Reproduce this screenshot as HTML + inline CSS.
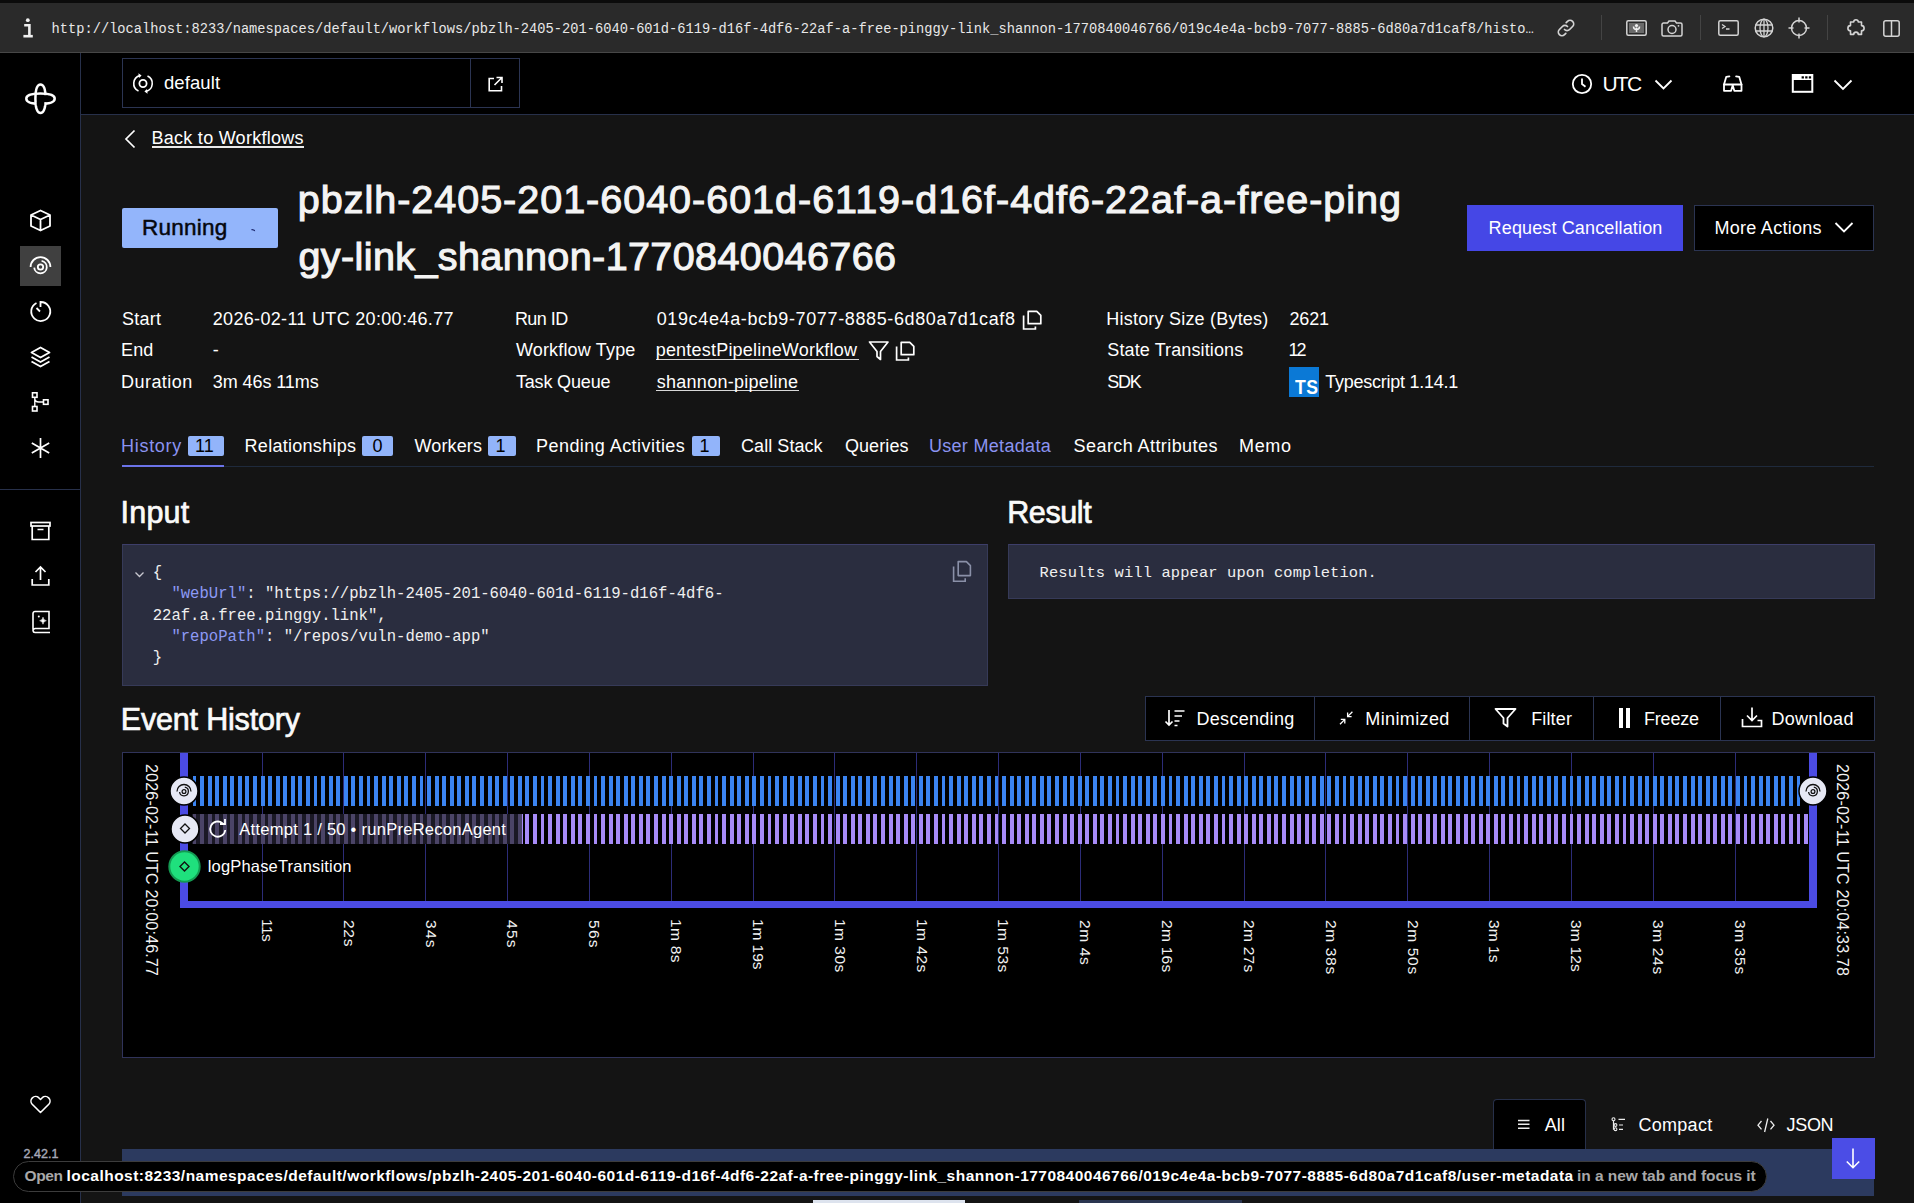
<!DOCTYPE html>
<html><head><meta charset="utf-8"><title>Workflow</title>
<style>
html,body{margin:0;padding:0;}
body{width:1914px;height:1203px;overflow:hidden;position:relative;background:#141414;font-family:'Liberation Sans', sans-serif;}
.t{position:absolute;white-space:pre;line-height:1;}
svg{overflow:visible}
</style></head><body>
<div style="position:absolute;left:0px;top:0px;width:1914px;height:3px;background:#0b0b0b;"></div><div style="position:absolute;left:0px;top:3px;width:1914px;height:49px;background:#2a2a2a;"></div><div style="position:absolute;left:0px;top:52px;width:1914px;height:1px;background:#474747;"></div><svg style="position:absolute;left:20px;top:15px;" width="16" height="26" viewBox="0 0 16 26" fill="none"><circle cx="7.8" cy="5.2" r="1.9" fill="#f0f0f0"/><path d="M4.2 10.2h5.2v10.6" stroke="#f0f0f0" stroke-width="2.6"/><path d="M3.4 21.2h9.4" stroke="#f0f0f0" stroke-width="2.6"/></svg><svg style="position:absolute;left:1556px;top:18px;" width="20" height="20" viewBox="0 0 20 20" fill="none"><path d="M8.5 11.5a3.6 3.6 0 0 0 5.1 0l3-3a3.6 3.6 0 0 0-5.1-5.1l-1.3 1.3M11.5 8.5a3.6 3.6 0 0 0-5.1 0l-3 3a3.6 3.6 0 0 0 5.1 5.1l1.3-1.3" stroke="#d4d4d4" stroke-width="1.7" stroke-linecap="round"/></svg><div style="position:absolute;left:1601px;top:15px;width:1px;height:25px;background:#444;"></div><svg style="position:absolute;left:1626px;top:20px;" width="21" height="16" viewBox="0 0 21 16" fill="none"><rect x="0.8" y="0.8" width="19.4" height="14.4" rx="1.5" stroke="#d4d4d4" stroke-width="1.5"/><rect x="3" y="3" width="15" height="10" fill="#6a6a6a"/><path d="M10.5 12V7.5M10.5 9.5c-2 0-3-1-3-3M10.5 9.5c2 0 3-1 3-3" stroke="#f0f0f0" stroke-width="1.5"/><circle cx="10.5" cy="5.5" r="1.6" fill="#f0f0f0"/></svg><svg style="position:absolute;left:1661px;top:20px;" width="22" height="17" viewBox="0 0 22 17" fill="none"><path d="M1 4.5a1.5 1.5 0 0 1 1.5-1.5h4l1.5-2h6l1.5 2h4a1.5 1.5 0 0 1 1.5 1.5v10a1.5 1.5 0 0 1-1.5 1.5h-17a1.5 1.5 0 0 1-1.5-1.5z" stroke="#d4d4d4" stroke-width="1.5"/><circle cx="11" cy="9.5" r="4" stroke="#d4d4d4" stroke-width="1.5"/><circle cx="17.5" cy="5.8" r="0.9" fill="#d4d4d4"/></svg><div style="position:absolute;left:1700px;top:15px;width:1px;height:25px;background:#444;"></div><svg style="position:absolute;left:1718px;top:20px;" width="21" height="16" viewBox="0 0 21 16" fill="none"><rect x="0.8" y="0.8" width="19.4" height="14.4" rx="1.5" stroke="#d4d4d4" stroke-width="1.5"/><path d="M4 4.5l3 2-3 2M8 9h3.5" stroke="#d4d4d4" stroke-width="1.3"/></svg><svg style="position:absolute;left:1754px;top:18px;" width="20" height="20" viewBox="0 0 20 20" fill="none"><circle cx="10" cy="10" r="8.8" stroke="#d4d4d4" stroke-width="1.5"/><ellipse cx="10" cy="10" rx="4" ry="8.8" stroke="#d4d4d4" stroke-width="1.3"/><path d="M1.5 7h17M1.5 13h17M10 1.2v17.6" stroke="#d4d4d4" stroke-width="1.3"/></svg><svg style="position:absolute;left:1788px;top:17px;" width="22" height="22" viewBox="0 0 22 22" fill="none"><circle cx="11" cy="11" r="7.5" stroke="#d4d4d4" stroke-width="1.5"/><path d="M11 0.5v5M11 16.5v5M0.5 11h5M16.5 11h5" stroke="#d4d4d4" stroke-width="1.5"/></svg><div style="position:absolute;left:1827px;top:15px;width:1px;height:25px;background:#444;"></div><svg style="position:absolute;left:1843px;top:18px;" width="26" height="20" viewBox="0 0 26 20" fill="none"><path d="M7.5 4h3.2a2.3 2.3 0 0 1 4.6 0h3.2v3.6a2.6 2.6 0 0 1 0 5.2v3.6h-3.2a2.3 2.3 0 0 0-4.6 0H7.5v-3.6a2.6 2.6 0 0 1 0-5.2z" stroke="#d4d4d4" stroke-width="1.6" stroke-linejoin="round"/></svg><svg style="position:absolute;left:1883px;top:20px;" width="17" height="17" viewBox="0 0 17 17" fill="none"><rect x="0.8" y="0.8" width="15.4" height="15.4" rx="2" stroke="#d4d4d4" stroke-width="1.5"/><path d="M8.5 1v15" stroke="#d4d4d4" stroke-width="1.5"/></svg><div style="position:absolute;left:0px;top:53px;width:80px;height:1150px;background:#000000;"></div><div style="position:absolute;left:80px;top:53px;width:1px;height:1150px;background:#27304a;"></div><div style="position:absolute;left:81px;top:53px;width:1833px;height:61px;background:#000000;"></div><div style="position:absolute;left:81px;top:114px;width:1833px;height:1px;background:#27304a;"></div><div style="position:absolute;left:0px;top:489px;width:80px;height:1px;background:#27304a;"></div><svg style="position:absolute;left:23px;top:82px;" width="35" height="35" viewBox="0 0 35 35" fill="none"><path d="M3.3 16.7C3.3 12.5 11 11.6 17.5 11.6S31.7 12.5 31.7 16.7 24 21.8 17.5 21.8 3.3 20.9 3.3 16.7z" stroke="#fff" stroke-width="2.5"/><path d="M17.5 2.5C13.3 2.5 12.4 10.2 12.4 16.7S13.3 30.9 17.5 30.9 22.6 23.2 22.6 16.7 21.7 2.5 17.5 2.5z" stroke="#fff" stroke-width="2.5"/><rect x="20.7" y="13.2" width="3.6" height="6.9" fill="#000"/><rect x="13.75" y="20.0" width="7.5" height="3.5" fill="#000"/></svg><svg style="position:absolute;left:29px;top:209px;" width="23" height="23" viewBox="0 0 23 23" fill="none"><path d="M11.5 1.5l9.5 4.5v11L11.5 21.5 2 17V6z M2 6l9.5 4.5L21 6 M11.5 10.5v11" stroke="#fff" stroke-width="1.8" stroke-linejoin="round"/></svg><div style="position:absolute;left:20px;top:246px;width:41px;height:40px;background:#404040;"></div><svg style="position:absolute;left:29px;top:255px;" width="23" height="22" viewBox="0 0 23 22" fill="none"><path d="M1.6 12A9.9 9.9 0 0 1 21.4 12" stroke="#fff" stroke-width="1.8"/><path d="M12.6 5.8A6.3 6.3 0 1 1 5.2 12.6" stroke="#fff" stroke-width="1.8"/><circle cx="11.5" cy="12" r="2.7" stroke="#fff" stroke-width="1.8"/></svg><svg style="position:absolute;left:29px;top:300px;" width="23" height="23" viewBox="0 0 23 23" fill="none"><path d="M7.5 3A9.5 9.5 0 1 0 11.5 2v5" stroke="#fff" stroke-width="1.8"/><path d="M7.5 8l3.5 3.5" stroke="#fff" stroke-width="1.8"/></svg><svg style="position:absolute;left:29px;top:345px;" width="23" height="24" viewBox="0 0 23 24" fill="none"><path d="M11.5 2.5l9 5-9 5-9-5z" stroke="#fff" stroke-width="1.8" stroke-linejoin="round"/><path d="M2.5 12l9 5 9-5M2.5 16.5l9 5 9-5" stroke="#fff" stroke-width="1.8" stroke-linejoin="round"/></svg><svg style="position:absolute;left:30px;top:391px;" width="22" height="24" viewBox="0 0 22 24" fill="none"><rect x="2.5" y="1.8" width="4.5" height="4.5" stroke="#fff" stroke-width="1.6"/><rect x="2.5" y="15.5" width="4.5" height="4.5" stroke="#fff" stroke-width="1.6"/><rect x="13.5" y="8.8" width="4.5" height="4.5" stroke="#fff" stroke-width="1.6"/><path d="M4.8 6.3v9.2M4.8 7.5c0 3 1.5 3.5 4 3.5h4.7" stroke="#fff" stroke-width="1.4"/></svg><svg style="position:absolute;left:29px;top:436px;" width="23" height="24" viewBox="0 0 23 24" fill="none"><path d="M11.5 2v20M2.8 7l17.4 10M2.8 17l17.4-10" stroke="#fff" stroke-width="1.7"/></svg><svg style="position:absolute;left:29px;top:520px;" width="23" height="22" viewBox="0 0 23 22" fill="none"><rect x="2" y="2.5" width="19" height="3.5" stroke="#fff" stroke-width="1.7"/><path d="M3.2 6v13.5h16.6V6M8.5 9.5h6" stroke="#fff" stroke-width="1.7"/></svg><svg style="position:absolute;left:29px;top:564px;" width="23" height="23" viewBox="0 0 23 23" fill="none"><path d="M11.5 16V3M6.5 8l5-5 5 5M3.2 15v6h16.6v-6" stroke="#fff" stroke-width="1.7"/></svg><svg style="position:absolute;left:29px;top:609px;" width="23" height="25" viewBox="0 0 23 25" fill="none"><path d="M4 20.5V4.5A2 2 0 0 1 6 2.5h14v17H6.2A2.2 2.2 0 0 0 4 21.7 2 2 0 0 0 6 23.5h15" stroke="#fff" stroke-width="1.6"/><path d="M14 8.2Q14.4 11.3 17.3 11.7Q14.4 12.1 14 15.2Q13.6 12.1 10.7 11.7Q13.6 11.3 14 8.2z" fill="#fff" stroke="#fff" stroke-width="0.6"/><circle cx="9.8" cy="7.6" r="1" fill="#fff"/></svg><svg style="position:absolute;left:29px;top:1093px;" width="23" height="22" viewBox="0 0 23 22" fill="none"><path d="M11.5 19.5L3.2 11.2A4.6 4.6 0 0 1 9.7 4.7l1.8 1.8 1.8-1.8a4.6 4.6 0 0 1 6.5 6.5z" stroke="#fff" stroke-width="1.6" stroke-linejoin="round"/></svg><div style="position:absolute;left:122px;top:58px;width:396px;height:48px;border:1px solid #2b3452;background:#000"></div><div style="position:absolute;left:470px;top:59px;width:1px;height:48px;background:#2b3452;"></div><svg style="position:absolute;left:132px;top:72px;" width="22" height="23" viewBox="0 0 22 23" fill="none"><circle cx="11" cy="11.5" r="3.6" stroke="#fff" stroke-width="1.8"/><path d="M6.5 19A8.2 8.2 0 0 1 8 3.6M15.5 4A8.2 8.2 0 0 1 14 19.4" stroke="#fff" stroke-width="1.6"/><path d="M6.4 1.2l3.2 2.2-2.6 2.6z M15.6 21.8l-3.2-2.2 2.6-2.6z" fill="#fff"/></svg><svg style="position:absolute;left:487px;top:76px;" width="16" height="16" viewBox="0 0 16 16" fill="none"><path d="M7 2.5H2.2v12.3h12.3V10M9.5 1.5h5.5V7M15 1.5L7.5 9" stroke="#fff" stroke-width="1.6"/></svg><svg style="position:absolute;left:1571px;top:73px;" width="22" height="22" viewBox="0 0 22 22" fill="none"><circle cx="11" cy="11" r="9.2" stroke="#fff" stroke-width="1.8"/><path d="M11 5.5v5.5l3.5 2.8" stroke="#fff" stroke-width="1.8"/></svg><svg style="position:absolute;left:1654px;top:78px;" width="19" height="13" viewBox="0 0 19 13" fill="none"><path d="M1.5 2.5l8 8 8-8" stroke="#fff" stroke-width="1.8"/></svg><svg style="position:absolute;left:1721px;top:74px;" width="24" height="19" viewBox="0 0 24 19" fill="none"><path d="M3 16.8V10.5h17.5v6.3h-7.2l-1.6-5.5-1.6 5.5z" stroke="#fff" stroke-width="1.8" stroke-linejoin="round"/><path d="M3 10.5l2.2-7.6 3.2-0.5M20.5 10.5l-2.2-7.6-3.2-0.5" stroke="#fff" stroke-width="1.8" stroke-linejoin="round" stroke-linecap="round"/></svg><svg style="position:absolute;left:1791px;top:73px;" width="24" height="21" viewBox="0 0 24 21" fill="none"><rect x="1.8" y="2" width="19.5" height="16.8" stroke="#fff" stroke-width="2"/><rect x="1.8" y="2" width="19.5" height="5" fill="#fff"/><rect x="10.6" y="3.3" width="2.3" height="2.2" fill="#000"/><rect x="14.2" y="3.3" width="2.3" height="2.2" fill="#000"/><rect x="17.8" y="3.3" width="2.3" height="2.2" fill="#000"/></svg><svg style="position:absolute;left:1833px;top:78px;" width="20" height="13" viewBox="0 0 20 13" fill="none"><path d="M1.5 2.5l8.5 8.5 8.5-8.5" stroke="#fff" stroke-width="1.8"/></svg><svg style="position:absolute;left:123px;top:129px;" width="14" height="20" viewBox="0 0 14 20" fill="none"><path d="M11.5 1.5L3 10l8.5 8.5" stroke="#fff" stroke-width="1.7"/></svg><div style="position:absolute;left:152px;top:146px;width:152px;height:2px;background:#eaeaea;"></div><div style="position:absolute;left:122px;top:208px;width:156px;height:40px;background:#93b5fb;border-radius:2px"></div><svg style="position:absolute;left:250px;top:227px;" width="9" height="6" viewBox="0 0 9 6" fill="none"><path d="M1.5 3c1.2-1.3 2.3 0.8 3.5 0.5" stroke="#1e2a70" stroke-width="1.3"/></svg><div style="position:absolute;left:1467px;top:205px;width:216px;height:46px;background:#4547e6;"></div><div style="position:absolute;left:1694px;top:205px;width:178px;height:44px;border:1px solid #2b3452;background:#000"></div><svg style="position:absolute;left:1834px;top:221px;" width="20" height="13" viewBox="0 0 20 13" fill="none"><path d="M1.5 2l8.5 8.5L18.5 2" stroke="#fff" stroke-width="1.8"/></svg><div style="position:absolute;left:656px;top:359px;width:203px;height:1px;background:#d8d8d8;"></div><div style="position:absolute;left:656px;top:390px;width:143px;height:1px;background:#d8d8d8;"></div><svg style="position:absolute;left:1022px;top:310px;" width="19" height="21" viewBox="0 0 19 21" fill="none"><path d="M6.2 1.3h8.6l4 4v8.4H6.2z" stroke="#fff" stroke-width="1.7" stroke-linejoin="round"/><path d="M1.6 5.4v13.6h11.8v-2.6" stroke="#fff" stroke-width="1.7"/></svg><svg style="position:absolute;left:868px;top:340px;" width="22" height="21" viewBox="0 0 22 21" fill="none"><path d="M1.5 2h18.5l-7.5 9.5v8l-3.5-3v-5z" stroke="#fff" stroke-width="1.7" stroke-linejoin="round"/></svg><svg style="position:absolute;left:894.8px;top:341px;" width="19" height="21" viewBox="0 0 19 21" fill="none"><path d="M6.2 1.3h8.6l4 4v8.4H6.2z" stroke="#fff" stroke-width="1.7" stroke-linejoin="round"/><path d="M1.6 5.4v13.6h11.8v-2.6" stroke="#fff" stroke-width="1.7"/></svg><div style="position:absolute;left:1289px;top:367px;width:30px;height:30px;background:#0b79d6;"></div><div style="position:absolute;left:1295.2px;top:377.2px;font-family:'Liberation Sans',sans-serif;font-weight:700;font-size:20.5px;line-height:20.5px;color:#fff;white-space:pre;letter-spacing:0.6px;transform:scaleX(0.86);transform-origin:0 0">TS</div><div style="position:absolute;left:188px;top:436px;width:36px;height:20px;background:#92b4fa;border-radius:2px"></div><div style="position:absolute;left:362px;top:436px;width:31px;height:20px;background:#92b4fa;border-radius:2px"></div><div style="position:absolute;left:488px;top:436px;width:28px;height:20px;background:#92b4fa;border-radius:2px"></div><div style="position:absolute;left:692px;top:436px;width:28px;height:20px;background:#92b4fa;border-radius:2px"></div><div style="position:absolute;left:122px;top:466px;width:1752px;height:1px;background:#1f2a3c;"></div><div style="position:absolute;left:122px;top:465px;width:102px;height:2px;background:#6b73e8;"></div><div style="position:absolute;left:122px;top:544px;width:864px;height:140px;background:#2a2d3f;border:1px solid #363a58;border-top-color:#3d3e6a"></div><div style="position:absolute;left:1008px;top:544px;width:865px;height:53px;background:#2a2d3f;border:1px solid #363a58;border-top-color:#3d3e6a"></div><svg style="position:absolute;left:134px;top:570px;" width="12" height="10" viewBox="0 0 12 10" fill="none"><path d="M1.5 2.5l4 4 4-4" stroke="#c8c8d0" stroke-width="1.3"/></svg><svg style="position:absolute;left:951px;top:560px;" width="21" height="23" viewBox="0 0 21 23" fill="none"><path d="M7.2 1.6h8.2l4 4v10H7.2z" stroke="#8a90a8" stroke-width="1.6" stroke-linejoin="round"/><path d="M2.6 6.6v14.6h11.6v-3" stroke="#8a90a8" stroke-width="1.6"/></svg><div style="position:absolute;left:1145px;top:696px;width:728px;height:43px;background:#000;border:1px solid #2b3452"></div><div style="position:absolute;left:1314px;top:697px;width:1px;height:43px;background:#2b3452;"></div><div style="position:absolute;left:1469px;top:697px;width:1px;height:43px;background:#2b3452;"></div><div style="position:absolute;left:1593px;top:697px;width:1px;height:43px;background:#2b3452;"></div><div style="position:absolute;left:1720px;top:697px;width:1px;height:43px;background:#2b3452;"></div><svg style="position:absolute;left:1164px;top:708px;" width="24" height="20" viewBox="0 0 24 20" fill="none"><path d="M5 2v15M1.5 13.5L5 17l3.5-3.5M10.5 3h10M10.5 8h7.5M10.5 13h5M10.5 17.5h3" stroke="#fff" stroke-width="1.7"/></svg><svg style="position:absolute;left:1338px;top:710px;" width="16" height="16" viewBox="0 0 16 16" fill="none"><path d="M2 14.2l4.6-4.6M2.8 9.4h4v4M14.4 1.8L9.8 6.4M9.6 2.6v4h4" stroke="#fff" stroke-width="1.3"/></svg><svg style="position:absolute;left:1494px;top:707px;" width="24" height="21" viewBox="0 0 24 21" fill="none"><path d="M1.5 2h20l-8 9v8.5l-4-3v-5.5z" stroke="#fff" stroke-width="1.8" stroke-linejoin="round"/></svg><div style="position:absolute;left:1619px;top:708px;width:4px;height:20px;background:#fff;"></div><div style="position:absolute;left:1626px;top:708px;width:4px;height:20px;background:#fff;"></div><svg style="position:absolute;left:1740px;top:706px;" width="24" height="22" viewBox="0 0 24 22" fill="none"><path d="M12 1.5v13M7 9.5l5 5 5-5M2.5 13v7.5h19V14.5h-4" stroke="#fff" stroke-width="1.7"/></svg><div style="position:absolute;left:122px;top:752px;width:1751px;height:304px;background:#000;border:1px solid #30335a"></div><div style="position:absolute;left:262px;top:753px;width:1px;height:148px;background:#2c2c78;"></div><div style="position:absolute;left:343px;top:753px;width:1px;height:148px;background:#2c2c78;"></div><div style="position:absolute;left:425px;top:753px;width:1px;height:148px;background:#2c2c78;"></div><div style="position:absolute;left:507px;top:753px;width:1px;height:148px;background:#2c2c78;"></div><div style="position:absolute;left:589px;top:753px;width:1px;height:148px;background:#2c2c78;"></div><div style="position:absolute;left:671px;top:753px;width:1px;height:148px;background:#2c2c78;"></div><div style="position:absolute;left:753px;top:753px;width:1px;height:148px;background:#2c2c78;"></div><div style="position:absolute;left:834px;top:753px;width:1px;height:148px;background:#2c2c78;"></div><div style="position:absolute;left:916px;top:753px;width:1px;height:148px;background:#2c2c78;"></div><div style="position:absolute;left:998px;top:753px;width:1px;height:148px;background:#2c2c78;"></div><div style="position:absolute;left:1080px;top:753px;width:1px;height:148px;background:#2c2c78;"></div><div style="position:absolute;left:1162px;top:753px;width:1px;height:148px;background:#2c2c78;"></div><div style="position:absolute;left:1244px;top:753px;width:1px;height:148px;background:#2c2c78;"></div><div style="position:absolute;left:1325px;top:753px;width:1px;height:148px;background:#2c2c78;"></div><div style="position:absolute;left:1407px;top:753px;width:1px;height:148px;background:#2c2c78;"></div><div style="position:absolute;left:1489px;top:753px;width:1px;height:148px;background:#2c2c78;"></div><div style="position:absolute;left:1571px;top:753px;width:1px;height:148px;background:#2c2c78;"></div><div style="position:absolute;left:1653px;top:753px;width:1px;height:148px;background:#2c2c78;"></div><div style="position:absolute;left:1735px;top:753px;width:1px;height:148px;background:#2c2c78;"></div><svg style="position:absolute;left:0;top:776px" width="1914" height="30" shape-rendering="crispEdges"><rect x="193" y="0" width="3" height="30" fill="#3b84f1"/><rect x="200" y="0" width="4" height="30" fill="#3b84f1"/><rect x="208" y="0" width="4" height="30" fill="#3b84f1"/><rect x="215" y="0" width="4" height="30" fill="#3b84f1"/><rect x="223" y="0" width="4" height="30" fill="#3b84f1"/><rect x="230" y="0" width="4" height="30" fill="#3b84f1"/><rect x="238" y="0" width="4" height="30" fill="#3b84f1"/><rect x="245" y="0" width="4" height="30" fill="#3b84f1"/><rect x="253" y="0" width="4" height="30" fill="#3b84f1"/><rect x="261" y="0" width="4" height="30" fill="#3b84f1"/><rect x="268" y="0" width="4" height="30" fill="#3b84f1"/><rect x="276" y="0" width="4" height="30" fill="#3b84f1"/><rect x="283" y="0" width="4" height="30" fill="#3b84f1"/><rect x="291" y="0" width="4" height="30" fill="#3b84f1"/><rect x="298" y="0" width="4" height="30" fill="#3b84f1"/><rect x="306" y="0" width="4" height="30" fill="#3b84f1"/><rect x="314" y="0" width="3" height="30" fill="#3b84f1"/><rect x="321" y="0" width="4" height="30" fill="#3b84f1"/><rect x="329" y="0" width="4" height="30" fill="#3b84f1"/><rect x="336" y="0" width="4" height="30" fill="#3b84f1"/><rect x="344" y="0" width="4" height="30" fill="#3b84f1"/><rect x="351" y="0" width="4" height="30" fill="#3b84f1"/><rect x="359" y="0" width="4" height="30" fill="#3b84f1"/><rect x="367" y="0" width="3" height="30" fill="#3b84f1"/><rect x="374" y="0" width="4" height="30" fill="#3b84f1"/><rect x="382" y="0" width="4" height="30" fill="#3b84f1"/><rect x="389" y="0" width="4" height="30" fill="#3b84f1"/><rect x="397" y="0" width="4" height="30" fill="#3b84f1"/><rect x="404" y="0" width="4" height="30" fill="#3b84f1"/><rect x="412" y="0" width="4" height="30" fill="#3b84f1"/><rect x="420" y="0" width="3" height="30" fill="#3b84f1"/><rect x="427" y="0" width="4" height="30" fill="#3b84f1"/><rect x="435" y="0" width="4" height="30" fill="#3b84f1"/><rect x="442" y="0" width="4" height="30" fill="#3b84f1"/><rect x="450" y="0" width="4" height="30" fill="#3b84f1"/><rect x="457" y="0" width="4" height="30" fill="#3b84f1"/><rect x="465" y="0" width="4" height="30" fill="#3b84f1"/><rect x="472" y="0" width="4" height="30" fill="#3b84f1"/><rect x="480" y="0" width="4" height="30" fill="#3b84f1"/><rect x="488" y="0" width="4" height="30" fill="#3b84f1"/><rect x="495" y="0" width="4" height="30" fill="#3b84f1"/><rect x="503" y="0" width="4" height="30" fill="#3b84f1"/><rect x="510" y="0" width="4" height="30" fill="#3b84f1"/><rect x="518" y="0" width="4" height="30" fill="#3b84f1"/><rect x="525" y="0" width="4" height="30" fill="#3b84f1"/><rect x="533" y="0" width="4" height="30" fill="#3b84f1"/><rect x="541" y="0" width="3" height="30" fill="#3b84f1"/><rect x="548" y="0" width="4" height="30" fill="#3b84f1"/><rect x="556" y="0" width="4" height="30" fill="#3b84f1"/><rect x="563" y="0" width="4" height="30" fill="#3b84f1"/><rect x="571" y="0" width="4" height="30" fill="#3b84f1"/><rect x="578" y="0" width="4" height="30" fill="#3b84f1"/><rect x="586" y="0" width="4" height="30" fill="#3b84f1"/><rect x="594" y="0" width="3" height="30" fill="#3b84f1"/><rect x="601" y="0" width="4" height="30" fill="#3b84f1"/><rect x="609" y="0" width="4" height="30" fill="#3b84f1"/><rect x="616" y="0" width="4" height="30" fill="#3b84f1"/><rect x="624" y="0" width="4" height="30" fill="#3b84f1"/><rect x="631" y="0" width="4" height="30" fill="#3b84f1"/><rect x="639" y="0" width="4" height="30" fill="#3b84f1"/><rect x="646" y="0" width="4" height="30" fill="#3b84f1"/><rect x="654" y="0" width="4" height="30" fill="#3b84f1"/><rect x="662" y="0" width="4" height="30" fill="#3b84f1"/><rect x="669" y="0" width="4" height="30" fill="#3b84f1"/><rect x="677" y="0" width="4" height="30" fill="#3b84f1"/><rect x="684" y="0" width="4" height="30" fill="#3b84f1"/><rect x="692" y="0" width="4" height="30" fill="#3b84f1"/><rect x="699" y="0" width="4" height="30" fill="#3b84f1"/><rect x="707" y="0" width="4" height="30" fill="#3b84f1"/><rect x="715" y="0" width="3" height="30" fill="#3b84f1"/><rect x="722" y="0" width="4" height="30" fill="#3b84f1"/><rect x="730" y="0" width="4" height="30" fill="#3b84f1"/><rect x="737" y="0" width="4" height="30" fill="#3b84f1"/><rect x="745" y="0" width="4" height="30" fill="#3b84f1"/><rect x="752" y="0" width="4" height="30" fill="#3b84f1"/><rect x="760" y="0" width="4" height="30" fill="#3b84f1"/><rect x="768" y="0" width="3" height="30" fill="#3b84f1"/><rect x="775" y="0" width="4" height="30" fill="#3b84f1"/><rect x="783" y="0" width="4" height="30" fill="#3b84f1"/><rect x="790" y="0" width="4" height="30" fill="#3b84f1"/><rect x="798" y="0" width="4" height="30" fill="#3b84f1"/><rect x="805" y="0" width="4" height="30" fill="#3b84f1"/><rect x="813" y="0" width="4" height="30" fill="#3b84f1"/><rect x="821" y="0" width="3" height="30" fill="#3b84f1"/><rect x="828" y="0" width="4" height="30" fill="#3b84f1"/><rect x="836" y="0" width="4" height="30" fill="#3b84f1"/><rect x="843" y="0" width="4" height="30" fill="#3b84f1"/><rect x="851" y="0" width="4" height="30" fill="#3b84f1"/><rect x="858" y="0" width="4" height="30" fill="#3b84f1"/><rect x="866" y="0" width="4" height="30" fill="#3b84f1"/><rect x="873" y="0" width="4" height="30" fill="#3b84f1"/><rect x="881" y="0" width="4" height="30" fill="#3b84f1"/><rect x="889" y="0" width="4" height="30" fill="#3b84f1"/><rect x="896" y="0" width="4" height="30" fill="#3b84f1"/><rect x="904" y="0" width="4" height="30" fill="#3b84f1"/><rect x="911" y="0" width="4" height="30" fill="#3b84f1"/><rect x="919" y="0" width="4" height="30" fill="#3b84f1"/><rect x="926" y="0" width="4" height="30" fill="#3b84f1"/><rect x="934" y="0" width="4" height="30" fill="#3b84f1"/><rect x="942" y="0" width="3" height="30" fill="#3b84f1"/><rect x="949" y="0" width="4" height="30" fill="#3b84f1"/><rect x="957" y="0" width="4" height="30" fill="#3b84f1"/><rect x="964" y="0" width="4" height="30" fill="#3b84f1"/><rect x="972" y="0" width="4" height="30" fill="#3b84f1"/><rect x="979" y="0" width="4" height="30" fill="#3b84f1"/><rect x="987" y="0" width="4" height="30" fill="#3b84f1"/><rect x="995" y="0" width="3" height="30" fill="#3b84f1"/><rect x="1002" y="0" width="4" height="30" fill="#3b84f1"/><rect x="1010" y="0" width="4" height="30" fill="#3b84f1"/><rect x="1017" y="0" width="4" height="30" fill="#3b84f1"/><rect x="1025" y="0" width="4" height="30" fill="#3b84f1"/><rect x="1032" y="0" width="4" height="30" fill="#3b84f1"/><rect x="1040" y="0" width="4" height="30" fill="#3b84f1"/><rect x="1047" y="0" width="4" height="30" fill="#3b84f1"/><rect x="1055" y="0" width="4" height="30" fill="#3b84f1"/><rect x="1063" y="0" width="4" height="30" fill="#3b84f1"/><rect x="1070" y="0" width="4" height="30" fill="#3b84f1"/><rect x="1078" y="0" width="4" height="30" fill="#3b84f1"/><rect x="1085" y="0" width="4" height="30" fill="#3b84f1"/><rect x="1093" y="0" width="4" height="30" fill="#3b84f1"/><rect x="1100" y="0" width="4" height="30" fill="#3b84f1"/><rect x="1108" y="0" width="4" height="30" fill="#3b84f1"/><rect x="1116" y="0" width="3" height="30" fill="#3b84f1"/><rect x="1123" y="0" width="4" height="30" fill="#3b84f1"/><rect x="1131" y="0" width="4" height="30" fill="#3b84f1"/><rect x="1138" y="0" width="4" height="30" fill="#3b84f1"/><rect x="1146" y="0" width="4" height="30" fill="#3b84f1"/><rect x="1153" y="0" width="4" height="30" fill="#3b84f1"/><rect x="1161" y="0" width="4" height="30" fill="#3b84f1"/><rect x="1169" y="0" width="3" height="30" fill="#3b84f1"/><rect x="1176" y="0" width="4" height="30" fill="#3b84f1"/><rect x="1184" y="0" width="4" height="30" fill="#3b84f1"/><rect x="1191" y="0" width="4" height="30" fill="#3b84f1"/><rect x="1199" y="0" width="4" height="30" fill="#3b84f1"/><rect x="1206" y="0" width="4" height="30" fill="#3b84f1"/><rect x="1214" y="0" width="4" height="30" fill="#3b84f1"/><rect x="1222" y="0" width="3" height="30" fill="#3b84f1"/><rect x="1229" y="0" width="4" height="30" fill="#3b84f1"/><rect x="1237" y="0" width="4" height="30" fill="#3b84f1"/><rect x="1244" y="0" width="4" height="30" fill="#3b84f1"/><rect x="1252" y="0" width="4" height="30" fill="#3b84f1"/><rect x="1259" y="0" width="4" height="30" fill="#3b84f1"/><rect x="1267" y="0" width="4" height="30" fill="#3b84f1"/><rect x="1274" y="0" width="4" height="30" fill="#3b84f1"/><rect x="1282" y="0" width="4" height="30" fill="#3b84f1"/><rect x="1290" y="0" width="4" height="30" fill="#3b84f1"/><rect x="1297" y="0" width="4" height="30" fill="#3b84f1"/><rect x="1305" y="0" width="4" height="30" fill="#3b84f1"/><rect x="1312" y="0" width="4" height="30" fill="#3b84f1"/><rect x="1320" y="0" width="4" height="30" fill="#3b84f1"/><rect x="1327" y="0" width="4" height="30" fill="#3b84f1"/><rect x="1335" y="0" width="4" height="30" fill="#3b84f1"/><rect x="1343" y="0" width="3" height="30" fill="#3b84f1"/><rect x="1350" y="0" width="4" height="30" fill="#3b84f1"/><rect x="1358" y="0" width="4" height="30" fill="#3b84f1"/><rect x="1365" y="0" width="4" height="30" fill="#3b84f1"/><rect x="1373" y="0" width="4" height="30" fill="#3b84f1"/><rect x="1380" y="0" width="4" height="30" fill="#3b84f1"/><rect x="1388" y="0" width="4" height="30" fill="#3b84f1"/><rect x="1396" y="0" width="3" height="30" fill="#3b84f1"/><rect x="1403" y="0" width="4" height="30" fill="#3b84f1"/><rect x="1411" y="0" width="4" height="30" fill="#3b84f1"/><rect x="1418" y="0" width="4" height="30" fill="#3b84f1"/><rect x="1426" y="0" width="4" height="30" fill="#3b84f1"/><rect x="1433" y="0" width="4" height="30" fill="#3b84f1"/><rect x="1441" y="0" width="4" height="30" fill="#3b84f1"/><rect x="1448" y="0" width="4" height="30" fill="#3b84f1"/><rect x="1456" y="0" width="4" height="30" fill="#3b84f1"/><rect x="1464" y="0" width="4" height="30" fill="#3b84f1"/><rect x="1471" y="0" width="4" height="30" fill="#3b84f1"/><rect x="1479" y="0" width="4" height="30" fill="#3b84f1"/><rect x="1486" y="0" width="4" height="30" fill="#3b84f1"/><rect x="1494" y="0" width="4" height="30" fill="#3b84f1"/><rect x="1501" y="0" width="4" height="30" fill="#3b84f1"/><rect x="1509" y="0" width="4" height="30" fill="#3b84f1"/><rect x="1517" y="0" width="3" height="30" fill="#3b84f1"/><rect x="1524" y="0" width="4" height="30" fill="#3b84f1"/><rect x="1532" y="0" width="4" height="30" fill="#3b84f1"/><rect x="1539" y="0" width="4" height="30" fill="#3b84f1"/><rect x="1547" y="0" width="4" height="30" fill="#3b84f1"/><rect x="1554" y="0" width="4" height="30" fill="#3b84f1"/><rect x="1562" y="0" width="4" height="30" fill="#3b84f1"/><rect x="1570" y="0" width="3" height="30" fill="#3b84f1"/><rect x="1577" y="0" width="4" height="30" fill="#3b84f1"/><rect x="1585" y="0" width="4" height="30" fill="#3b84f1"/><rect x="1592" y="0" width="4" height="30" fill="#3b84f1"/><rect x="1600" y="0" width="4" height="30" fill="#3b84f1"/><rect x="1607" y="0" width="4" height="30" fill="#3b84f1"/><rect x="1615" y="0" width="4" height="30" fill="#3b84f1"/><rect x="1623" y="0" width="3" height="30" fill="#3b84f1"/><rect x="1630" y="0" width="4" height="30" fill="#3b84f1"/><rect x="1638" y="0" width="4" height="30" fill="#3b84f1"/><rect x="1645" y="0" width="4" height="30" fill="#3b84f1"/><rect x="1653" y="0" width="4" height="30" fill="#3b84f1"/><rect x="1660" y="0" width="4" height="30" fill="#3b84f1"/><rect x="1668" y="0" width="4" height="30" fill="#3b84f1"/><rect x="1675" y="0" width="4" height="30" fill="#3b84f1"/><rect x="1683" y="0" width="4" height="30" fill="#3b84f1"/><rect x="1691" y="0" width="4" height="30" fill="#3b84f1"/><rect x="1698" y="0" width="4" height="30" fill="#3b84f1"/><rect x="1706" y="0" width="4" height="30" fill="#3b84f1"/><rect x="1713" y="0" width="4" height="30" fill="#3b84f1"/><rect x="1721" y="0" width="4" height="30" fill="#3b84f1"/><rect x="1728" y="0" width="4" height="30" fill="#3b84f1"/><rect x="1736" y="0" width="4" height="30" fill="#3b84f1"/><rect x="1744" y="0" width="3" height="30" fill="#3b84f1"/><rect x="1751" y="0" width="4" height="30" fill="#3b84f1"/><rect x="1759" y="0" width="4" height="30" fill="#3b84f1"/><rect x="1766" y="0" width="4" height="30" fill="#3b84f1"/><rect x="1774" y="0" width="4" height="30" fill="#3b84f1"/><rect x="1781" y="0" width="4" height="30" fill="#3b84f1"/><rect x="1789" y="0" width="4" height="30" fill="#3b84f1"/><rect x="1797" y="0" width="3" height="30" fill="#3b84f1"/></svg><svg style="position:absolute;left:0;top:814px" width="1914" height="30" shape-rendering="crispEdges"><rect x="192" y="0" width="329.5" height="30" fill="#1a1825"/><rect x="193" y="0" width="3" height="30" fill="#4b4467"/><rect x="200" y="0" width="4" height="30" fill="#4b4467"/><rect x="208" y="0" width="4" height="30" fill="#4b4467"/><rect x="215" y="0" width="4" height="30" fill="#4b4467"/><rect x="223" y="0" width="4" height="30" fill="#4b4467"/><rect x="230" y="0" width="4" height="30" fill="#4b4467"/><rect x="238" y="0" width="4" height="30" fill="#4b4467"/><rect x="245" y="0" width="4" height="30" fill="#4b4467"/><rect x="253" y="0" width="4" height="30" fill="#4b4467"/><rect x="261" y="0" width="4" height="30" fill="#4b4467"/><rect x="268" y="0" width="4" height="30" fill="#4b4467"/><rect x="276" y="0" width="4" height="30" fill="#4b4467"/><rect x="283" y="0" width="4" height="30" fill="#4b4467"/><rect x="291" y="0" width="4" height="30" fill="#4b4467"/><rect x="298" y="0" width="4" height="30" fill="#4b4467"/><rect x="306" y="0" width="4" height="30" fill="#4b4467"/><rect x="314" y="0" width="3" height="30" fill="#4b4467"/><rect x="321" y="0" width="4" height="30" fill="#4b4467"/><rect x="329" y="0" width="4" height="30" fill="#4b4467"/><rect x="336" y="0" width="4" height="30" fill="#4b4467"/><rect x="344" y="0" width="4" height="30" fill="#4b4467"/><rect x="351" y="0" width="4" height="30" fill="#4b4467"/><rect x="359" y="0" width="4" height="30" fill="#4b4467"/><rect x="367" y="0" width="3" height="30" fill="#4b4467"/><rect x="374" y="0" width="4" height="30" fill="#4b4467"/><rect x="382" y="0" width="4" height="30" fill="#4b4467"/><rect x="389" y="0" width="4" height="30" fill="#4b4467"/><rect x="397" y="0" width="4" height="30" fill="#4b4467"/><rect x="404" y="0" width="4" height="30" fill="#4b4467"/><rect x="412" y="0" width="4" height="30" fill="#4b4467"/><rect x="420" y="0" width="3" height="30" fill="#4b4467"/><rect x="427" y="0" width="4" height="30" fill="#4b4467"/><rect x="435" y="0" width="4" height="30" fill="#4b4467"/><rect x="442" y="0" width="4" height="30" fill="#4b4467"/><rect x="450" y="0" width="4" height="30" fill="#4b4467"/><rect x="457" y="0" width="4" height="30" fill="#4b4467"/><rect x="465" y="0" width="4" height="30" fill="#4b4467"/><rect x="472" y="0" width="4" height="30" fill="#4b4467"/><rect x="480" y="0" width="4" height="30" fill="#4b4467"/><rect x="488" y="0" width="4" height="30" fill="#4b4467"/><rect x="495" y="0" width="4" height="30" fill="#4b4467"/><rect x="503" y="0" width="4" height="30" fill="#4b4467"/><rect x="510" y="0" width="4" height="30" fill="#4b4467"/><rect x="518" y="0" width="4" height="30" fill="#4b4467"/></svg><svg style="position:absolute;left:0;top:814px" width="1914" height="30" shape-rendering="crispEdges"><rect x="522" y="0" width="1" height="30" fill="#a78bf7"/><rect x="525" y="0" width="4" height="30" fill="#a78bf7"/><rect x="533" y="0" width="4" height="30" fill="#a78bf7"/><rect x="541" y="0" width="3" height="30" fill="#a78bf7"/><rect x="548" y="0" width="4" height="30" fill="#a78bf7"/><rect x="556" y="0" width="4" height="30" fill="#a78bf7"/><rect x="563" y="0" width="4" height="30" fill="#a78bf7"/><rect x="571" y="0" width="4" height="30" fill="#a78bf7"/><rect x="578" y="0" width="4" height="30" fill="#a78bf7"/><rect x="586" y="0" width="4" height="30" fill="#a78bf7"/><rect x="594" y="0" width="3" height="30" fill="#a78bf7"/><rect x="601" y="0" width="4" height="30" fill="#a78bf7"/><rect x="609" y="0" width="4" height="30" fill="#a78bf7"/><rect x="616" y="0" width="4" height="30" fill="#a78bf7"/><rect x="624" y="0" width="4" height="30" fill="#a78bf7"/><rect x="631" y="0" width="4" height="30" fill="#a78bf7"/><rect x="639" y="0" width="4" height="30" fill="#a78bf7"/><rect x="646" y="0" width="4" height="30" fill="#a78bf7"/><rect x="654" y="0" width="4" height="30" fill="#a78bf7"/><rect x="662" y="0" width="4" height="30" fill="#a78bf7"/><rect x="669" y="0" width="4" height="30" fill="#a78bf7"/><rect x="677" y="0" width="4" height="30" fill="#a78bf7"/><rect x="684" y="0" width="4" height="30" fill="#a78bf7"/><rect x="692" y="0" width="4" height="30" fill="#a78bf7"/><rect x="699" y="0" width="4" height="30" fill="#a78bf7"/><rect x="707" y="0" width="4" height="30" fill="#a78bf7"/><rect x="715" y="0" width="3" height="30" fill="#a78bf7"/><rect x="722" y="0" width="4" height="30" fill="#a78bf7"/><rect x="730" y="0" width="4" height="30" fill="#a78bf7"/><rect x="737" y="0" width="4" height="30" fill="#a78bf7"/><rect x="745" y="0" width="4" height="30" fill="#a78bf7"/><rect x="752" y="0" width="4" height="30" fill="#a78bf7"/><rect x="760" y="0" width="4" height="30" fill="#a78bf7"/><rect x="768" y="0" width="3" height="30" fill="#a78bf7"/><rect x="775" y="0" width="4" height="30" fill="#a78bf7"/><rect x="783" y="0" width="4" height="30" fill="#a78bf7"/><rect x="790" y="0" width="4" height="30" fill="#a78bf7"/><rect x="798" y="0" width="4" height="30" fill="#a78bf7"/><rect x="805" y="0" width="4" height="30" fill="#a78bf7"/><rect x="813" y="0" width="4" height="30" fill="#a78bf7"/><rect x="821" y="0" width="3" height="30" fill="#a78bf7"/><rect x="828" y="0" width="4" height="30" fill="#a78bf7"/><rect x="836" y="0" width="4" height="30" fill="#a78bf7"/><rect x="843" y="0" width="4" height="30" fill="#a78bf7"/><rect x="851" y="0" width="4" height="30" fill="#a78bf7"/><rect x="858" y="0" width="4" height="30" fill="#a78bf7"/><rect x="866" y="0" width="4" height="30" fill="#a78bf7"/><rect x="873" y="0" width="4" height="30" fill="#a78bf7"/><rect x="881" y="0" width="4" height="30" fill="#a78bf7"/><rect x="889" y="0" width="4" height="30" fill="#a78bf7"/><rect x="896" y="0" width="4" height="30" fill="#a78bf7"/><rect x="904" y="0" width="4" height="30" fill="#a78bf7"/><rect x="911" y="0" width="4" height="30" fill="#a78bf7"/><rect x="919" y="0" width="4" height="30" fill="#a78bf7"/><rect x="926" y="0" width="4" height="30" fill="#a78bf7"/><rect x="934" y="0" width="4" height="30" fill="#a78bf7"/><rect x="942" y="0" width="3" height="30" fill="#a78bf7"/><rect x="949" y="0" width="4" height="30" fill="#a78bf7"/><rect x="957" y="0" width="4" height="30" fill="#a78bf7"/><rect x="964" y="0" width="4" height="30" fill="#a78bf7"/><rect x="972" y="0" width="4" height="30" fill="#a78bf7"/><rect x="979" y="0" width="4" height="30" fill="#a78bf7"/><rect x="987" y="0" width="4" height="30" fill="#a78bf7"/><rect x="995" y="0" width="3" height="30" fill="#a78bf7"/><rect x="1002" y="0" width="4" height="30" fill="#a78bf7"/><rect x="1010" y="0" width="4" height="30" fill="#a78bf7"/><rect x="1017" y="0" width="4" height="30" fill="#a78bf7"/><rect x="1025" y="0" width="4" height="30" fill="#a78bf7"/><rect x="1032" y="0" width="4" height="30" fill="#a78bf7"/><rect x="1040" y="0" width="4" height="30" fill="#a78bf7"/><rect x="1047" y="0" width="4" height="30" fill="#a78bf7"/><rect x="1055" y="0" width="4" height="30" fill="#a78bf7"/><rect x="1063" y="0" width="4" height="30" fill="#a78bf7"/><rect x="1070" y="0" width="4" height="30" fill="#a78bf7"/><rect x="1078" y="0" width="4" height="30" fill="#a78bf7"/><rect x="1085" y="0" width="4" height="30" fill="#a78bf7"/><rect x="1093" y="0" width="4" height="30" fill="#a78bf7"/><rect x="1100" y="0" width="4" height="30" fill="#a78bf7"/><rect x="1108" y="0" width="4" height="30" fill="#a78bf7"/><rect x="1116" y="0" width="3" height="30" fill="#a78bf7"/><rect x="1123" y="0" width="4" height="30" fill="#a78bf7"/><rect x="1131" y="0" width="4" height="30" fill="#a78bf7"/><rect x="1138" y="0" width="4" height="30" fill="#a78bf7"/><rect x="1146" y="0" width="4" height="30" fill="#a78bf7"/><rect x="1153" y="0" width="4" height="30" fill="#a78bf7"/><rect x="1161" y="0" width="4" height="30" fill="#a78bf7"/><rect x="1169" y="0" width="3" height="30" fill="#a78bf7"/><rect x="1176" y="0" width="4" height="30" fill="#a78bf7"/><rect x="1184" y="0" width="4" height="30" fill="#a78bf7"/><rect x="1191" y="0" width="4" height="30" fill="#a78bf7"/><rect x="1199" y="0" width="4" height="30" fill="#a78bf7"/><rect x="1206" y="0" width="4" height="30" fill="#a78bf7"/><rect x="1214" y="0" width="4" height="30" fill="#a78bf7"/><rect x="1222" y="0" width="3" height="30" fill="#a78bf7"/><rect x="1229" y="0" width="4" height="30" fill="#a78bf7"/><rect x="1237" y="0" width="4" height="30" fill="#a78bf7"/><rect x="1244" y="0" width="4" height="30" fill="#a78bf7"/><rect x="1252" y="0" width="4" height="30" fill="#a78bf7"/><rect x="1259" y="0" width="4" height="30" fill="#a78bf7"/><rect x="1267" y="0" width="4" height="30" fill="#a78bf7"/><rect x="1274" y="0" width="4" height="30" fill="#a78bf7"/><rect x="1282" y="0" width="4" height="30" fill="#a78bf7"/><rect x="1290" y="0" width="4" height="30" fill="#a78bf7"/><rect x="1297" y="0" width="4" height="30" fill="#a78bf7"/><rect x="1305" y="0" width="4" height="30" fill="#a78bf7"/><rect x="1312" y="0" width="4" height="30" fill="#a78bf7"/><rect x="1320" y="0" width="4" height="30" fill="#a78bf7"/><rect x="1327" y="0" width="4" height="30" fill="#a78bf7"/><rect x="1335" y="0" width="4" height="30" fill="#a78bf7"/><rect x="1343" y="0" width="3" height="30" fill="#a78bf7"/><rect x="1350" y="0" width="4" height="30" fill="#a78bf7"/><rect x="1358" y="0" width="4" height="30" fill="#a78bf7"/><rect x="1365" y="0" width="4" height="30" fill="#a78bf7"/><rect x="1373" y="0" width="4" height="30" fill="#a78bf7"/><rect x="1380" y="0" width="4" height="30" fill="#a78bf7"/><rect x="1388" y="0" width="4" height="30" fill="#a78bf7"/><rect x="1396" y="0" width="3" height="30" fill="#a78bf7"/><rect x="1403" y="0" width="4" height="30" fill="#a78bf7"/><rect x="1411" y="0" width="4" height="30" fill="#a78bf7"/><rect x="1418" y="0" width="4" height="30" fill="#a78bf7"/><rect x="1426" y="0" width="4" height="30" fill="#a78bf7"/><rect x="1433" y="0" width="4" height="30" fill="#a78bf7"/><rect x="1441" y="0" width="4" height="30" fill="#a78bf7"/><rect x="1448" y="0" width="4" height="30" fill="#a78bf7"/><rect x="1456" y="0" width="4" height="30" fill="#a78bf7"/><rect x="1464" y="0" width="4" height="30" fill="#a78bf7"/><rect x="1471" y="0" width="4" height="30" fill="#a78bf7"/><rect x="1479" y="0" width="4" height="30" fill="#a78bf7"/><rect x="1486" y="0" width="4" height="30" fill="#a78bf7"/><rect x="1494" y="0" width="4" height="30" fill="#a78bf7"/><rect x="1501" y="0" width="4" height="30" fill="#a78bf7"/><rect x="1509" y="0" width="4" height="30" fill="#a78bf7"/><rect x="1517" y="0" width="3" height="30" fill="#a78bf7"/><rect x="1524" y="0" width="4" height="30" fill="#a78bf7"/><rect x="1532" y="0" width="4" height="30" fill="#a78bf7"/><rect x="1539" y="0" width="4" height="30" fill="#a78bf7"/><rect x="1547" y="0" width="4" height="30" fill="#a78bf7"/><rect x="1554" y="0" width="4" height="30" fill="#a78bf7"/><rect x="1562" y="0" width="4" height="30" fill="#a78bf7"/><rect x="1570" y="0" width="3" height="30" fill="#a78bf7"/><rect x="1577" y="0" width="4" height="30" fill="#a78bf7"/><rect x="1585" y="0" width="4" height="30" fill="#a78bf7"/><rect x="1592" y="0" width="4" height="30" fill="#a78bf7"/><rect x="1600" y="0" width="4" height="30" fill="#a78bf7"/><rect x="1607" y="0" width="4" height="30" fill="#a78bf7"/><rect x="1615" y="0" width="4" height="30" fill="#a78bf7"/><rect x="1623" y="0" width="3" height="30" fill="#a78bf7"/><rect x="1630" y="0" width="4" height="30" fill="#a78bf7"/><rect x="1638" y="0" width="4" height="30" fill="#a78bf7"/><rect x="1645" y="0" width="4" height="30" fill="#a78bf7"/><rect x="1653" y="0" width="4" height="30" fill="#a78bf7"/><rect x="1660" y="0" width="4" height="30" fill="#a78bf7"/><rect x="1668" y="0" width="4" height="30" fill="#a78bf7"/><rect x="1675" y="0" width="4" height="30" fill="#a78bf7"/><rect x="1683" y="0" width="4" height="30" fill="#a78bf7"/><rect x="1691" y="0" width="4" height="30" fill="#a78bf7"/><rect x="1698" y="0" width="4" height="30" fill="#a78bf7"/><rect x="1706" y="0" width="4" height="30" fill="#a78bf7"/><rect x="1713" y="0" width="4" height="30" fill="#a78bf7"/><rect x="1721" y="0" width="4" height="30" fill="#a78bf7"/><rect x="1728" y="0" width="4" height="30" fill="#a78bf7"/><rect x="1736" y="0" width="4" height="30" fill="#a78bf7"/><rect x="1744" y="0" width="3" height="30" fill="#a78bf7"/><rect x="1751" y="0" width="4" height="30" fill="#a78bf7"/><rect x="1759" y="0" width="4" height="30" fill="#a78bf7"/><rect x="1766" y="0" width="4" height="30" fill="#a78bf7"/><rect x="1774" y="0" width="4" height="30" fill="#a78bf7"/><rect x="1781" y="0" width="4" height="30" fill="#a78bf7"/><rect x="1789" y="0" width="4" height="30" fill="#a78bf7"/><rect x="1797" y="0" width="3" height="30" fill="#a78bf7"/><rect x="1804" y="0" width="4" height="30" fill="#a78bf7"/></svg><div style="position:absolute;left:180px;top:753px;width:8px;height:155px;background:#4b4be3;"></div><div style="position:absolute;left:180px;top:901px;width:1637px;height:7px;background:#4b4be3;"></div><div style="position:absolute;left:1809px;top:753px;width:8px;height:155px;background:#4b4be3;"></div><svg style="position:absolute;left:169px;top:776px;" width="30" height="30" viewBox="0 0 30 30" fill="none"><circle cx="15" cy="15" r="14" fill="#e6e8f4" stroke="#000" stroke-width="1.5"/><g transform="translate(15,15)"><path d="M-7 0.5A7 7 0 0 1 7 0.5" stroke="#111" stroke-width="1.3"/><path d="M0.8 -3.9A4.4 4.4 0 1 1 -4.4 1" stroke="#111" stroke-width="1.3"/><circle cx="0" cy="0.5" r="1.9" stroke="#111" stroke-width="1.3"/></g></svg><svg style="position:absolute;left:1798px;top:776px;" width="30" height="30" viewBox="0 0 30 30" fill="none"><circle cx="15" cy="15" r="14" fill="#e6e8f4" stroke="#000" stroke-width="1.5"/><g transform="translate(15,15)"><path d="M-7 0.5A7 7 0 0 1 7 0.5" stroke="#111" stroke-width="1.3"/><path d="M0.8 -3.9A4.4 4.4 0 1 1 -4.4 1" stroke="#111" stroke-width="1.3"/><circle cx="0" cy="0.5" r="1.9" stroke="#111" stroke-width="1.3"/></g></svg><svg style="position:absolute;left:170px;top:814px;" width="30" height="30" viewBox="0 0 30 30" fill="none"><circle cx="15" cy="15" r="14" fill="#e6e8f4" stroke="#000" stroke-width="1.5"/><path d="M15 10l4.5 4.5-4.5 4.5-4.5-4.5z" stroke="#111" stroke-width="1.3"/></svg><svg style="position:absolute;left:168px;top:850px;" width="33" height="33" viewBox="0 0 33 33" fill="none"><circle cx="16.5" cy="16.5" r="15.2" fill="#1fe07d" stroke="#139a52" stroke-width="2"/><path d="M16.5 12l4.5 4.5-4.5 4.5-4.5-4.5z" stroke="#111" stroke-width="1.4"/></svg><svg style="position:absolute;left:208px;top:819px;" width="21" height="20" viewBox="0 0 21 20" fill="none"><path d="M17.3 11A7.6 7.6 0 1 1 14.5 4.2" stroke="#fff" stroke-width="1.8"/><path d="M10.5 3.5h5V-1.5" stroke="#fff" stroke-width="1.8" transform="translate(1.5,1.5)"/></svg><div style="position:absolute;left:1493px;top:1099px;width:91px;height:55px;background:#000;border:1px solid #27304a;border-bottom:none;border-radius:4px 4px 0 0"></div><svg style="position:absolute;left:1516px;top:1117px;" width="16" height="14" viewBox="0 0 16 14" fill="none"><path d="M2 3.5h11.5M2 7.3h11.5M2 11.2h11.5" stroke="#eee" stroke-width="1.4"/></svg><svg style="position:absolute;left:1609px;top:1115px;" width="18" height="18" viewBox="0 0 18 18" fill="none"><circle cx="4.5" cy="4.2" r="1.5" stroke="#eee" stroke-width="1.1"/><circle cx="6.5" cy="10" r="1.4" stroke="#eee" stroke-width="1.1"/><circle cx="6.5" cy="14.2" r="1.4" stroke="#eee" stroke-width="1.1"/><path d="M4.5 5.7v8.5h0.6M4.5 10h0.6M9.5 4.3h6.5M10 10h4M10 14.3h4" stroke="#eee" stroke-width="1.2"/></svg><svg style="position:absolute;left:1756px;top:1116px;" width="20" height="18" viewBox="0 0 20 18" fill="none"><path d="M5.5 5L2 9.2l3.5 4.2M14.5 5L18 9.2l-3.5 4.2M11.8 2.5l-3.2 13.5" stroke="#eee" stroke-width="1.3"/></svg><div style="position:absolute;left:122px;top:1149px;width:1752px;height:47px;background:#2c3a5f;"></div><div style="position:absolute;left:813px;top:1200px;width:152px;height:3px;background:#dde3ee;"></div><div style="position:absolute;left:1079px;top:1200px;width:163px;height:3px;background:#2a3550;"></div><div style="position:absolute;left:1832px;top:1138px;width:43px;height:41px;background:#4b4de6;"></div><svg style="position:absolute;left:1843px;top:1146px;" width="20" height="25" viewBox="0 0 20 25" fill="none"><path d="M10 2.5v19M3.8 15.5l6.2 6.2 6.2-6.2" stroke="#fff" stroke-width="1.6"/></svg><div style="position:absolute;left:13px;top:1161px;width:1752px;height:29px;background:#000;border:1px solid #3c3c3c;border-radius:16px"></div>
<div class="t" style="left:51.50px;top:22.99px;font-family:'Liberation Mono', monospace;font-size:13.71px;font-weight:400;color:#e8e8e8;letter-spacing:0.011px;">http://localhost:8233/namespaces/default/workflows/pbzlh-2405-201-6040-601d-6119-d16f-4df6-22af-a-free-pinggy-link_shannon-1770840046766/019c4e4a-bcb9-7077-8885-6d80a7d1caf8/histo…</div><div class="t" style="left:23.40px;top:1148.22px;font-family:'Liberation Sans', sans-serif;font-size:12.5px;font-weight:400;color:#a6a8b8;letter-spacing:0.040px;-webkit-text-stroke:0.4px #a6a8b8">2.42.1</div><div class="t" style="left:163.90px;top:74.44px;font-family:'Liberation Sans', sans-serif;font-size:18.5px;font-weight:400;color:#fff;letter-spacing:0.099px;">default</div><div class="t" style="left:1602.40px;top:73.42px;font-family:'Liberation Sans', sans-serif;font-size:21px;font-weight:400;color:#fff;letter-spacing:-1.697px;">UTC</div><div class="t" style="left:151.50px;top:128.56px;font-family:'Liberation Sans', sans-serif;font-size:18px;font-weight:400;color:#fff;letter-spacing:0.268px;">Back to Workflows</div><div class="t" style="left:142.00px;top:216.95px;font-family:'Liberation Sans', sans-serif;font-size:22.5px;font-weight:400;color:#05070d;letter-spacing:0.250px;-webkit-text-stroke:0.5px #05070d">Running</div><div class="t" style="left:297.80px;top:180.46px;font-family:'Liberation Sans', sans-serif;font-size:39.5px;font-weight:400;color:#f4f4f4;letter-spacing:0.986px;-webkit-text-stroke:1.1px #f4f4f4">pbzlh-2405-201-6040-601d-6119-d16f-4df6-22af-a-free-ping</div><div class="t" style="left:298.50px;top:236.86px;font-family:'Liberation Sans', sans-serif;font-size:39.5px;font-weight:400;color:#f4f4f4;letter-spacing:0.395px;-webkit-text-stroke:1.1px #f4f4f4">gy-link_shannon-1770840046766</div><div class="t" style="left:1488.60px;top:218.56px;font-family:'Liberation Sans', sans-serif;font-size:18px;font-weight:400;color:#fff;letter-spacing:0.137px;">Request Cancellation</div><div class="t" style="left:1714.50px;top:218.56px;font-family:'Liberation Sans', sans-serif;font-size:18px;font-weight:400;color:#fff;letter-spacing:0.269px;">More Actions</div><div class="t" style="left:122.10px;top:309.56px;font-family:'Liberation Sans', sans-serif;font-size:18px;font-weight:400;color:#fff;letter-spacing:0.247px;">Start</div><div class="t" style="left:121.10px;top:341.16px;font-family:'Liberation Sans', sans-serif;font-size:18px;font-weight:400;color:#fff;letter-spacing:0.042px;">End</div><div class="t" style="left:121.10px;top:372.56px;font-family:'Liberation Sans', sans-serif;font-size:18px;font-weight:400;color:#fff;letter-spacing:0.439px;">Duration</div><div class="t" style="left:212.80px;top:309.56px;font-family:'Liberation Sans', sans-serif;font-size:18px;font-weight:400;color:#fff;letter-spacing:0.316px;">2026-02-11 UTC 20:00:46.77</div><div class="t" style="left:212.80px;top:341.16px;font-family:'Liberation Sans', sans-serif;font-size:18px;font-weight:400;color:#fff;letter-spacing:0.000px;">-</div><div class="t" style="left:212.80px;top:372.56px;font-family:'Liberation Sans', sans-serif;font-size:18px;font-weight:400;color:#fff;letter-spacing:-0.081px;">3m 46s 11ms</div><div class="t" style="left:514.90px;top:309.56px;font-family:'Liberation Sans', sans-serif;font-size:18px;font-weight:400;color:#fff;letter-spacing:-0.544px;">Run ID</div><div class="t" style="left:515.90px;top:341.16px;font-family:'Liberation Sans', sans-serif;font-size:18px;font-weight:400;color:#fff;letter-spacing:0.176px;">Workflow Type</div><div class="t" style="left:515.90px;top:372.56px;font-family:'Liberation Sans', sans-serif;font-size:18px;font-weight:400;color:#fff;letter-spacing:-0.161px;">Task Queue</div><div class="t" style="left:656.70px;top:309.56px;font-family:'Liberation Sans', sans-serif;font-size:18px;font-weight:400;color:#fff;letter-spacing:0.629px;">019c4e4a-bcb9-7077-8885-6d80a7d1caf8</div><div class="t" style="left:655.70px;top:341.16px;font-family:'Liberation Sans', sans-serif;font-size:18px;font-weight:400;color:#fff;letter-spacing:0.206px;">pentestPipelineWorkflow</div><div class="t" style="left:656.70px;top:372.56px;font-family:'Liberation Sans', sans-serif;font-size:18px;font-weight:400;color:#fff;letter-spacing:0.280px;">shannon-pipeline</div><div class="t" style="left:1106.30px;top:309.56px;font-family:'Liberation Sans', sans-serif;font-size:18px;font-weight:400;color:#fff;letter-spacing:0.209px;">History Size (Bytes)</div><div class="t" style="left:1107.30px;top:341.16px;font-family:'Liberation Sans', sans-serif;font-size:18px;font-weight:400;color:#fff;letter-spacing:0.113px;">State Transitions</div><div class="t" style="left:1107.30px;top:372.56px;font-family:'Liberation Sans', sans-serif;font-size:18px;font-weight:400;color:#fff;letter-spacing:-1.302px;">SDK</div><div class="t" style="left:1289.60px;top:309.56px;font-family:'Liberation Sans', sans-serif;font-size:18px;font-weight:400;color:#fff;letter-spacing:-0.244px;">2621</div><div class="t" style="left:1288.60px;top:341.16px;font-family:'Liberation Sans', sans-serif;font-size:18px;font-weight:400;color:#fff;letter-spacing:-2.111px;">12</div><div class="t" style="left:1325.30px;top:372.56px;font-family:'Liberation Sans', sans-serif;font-size:18px;font-weight:400;color:#fff;letter-spacing:-0.254px;">Typescript 1.14.1</div><div class="t" style="left:121.00px;top:437.16px;font-family:'Liberation Sans', sans-serif;font-size:18px;font-weight:400;color:#8b93f0;letter-spacing:0.716px;">History</div><div class="t" style="left:195.00px;top:437.16px;font-family:'Liberation Sans', sans-serif;font-size:18px;font-weight:400;color:#000;letter-spacing:0.000px;">11</div><div class="t" style="left:244.60px;top:437.16px;font-family:'Liberation Sans', sans-serif;font-size:18px;font-weight:400;color:#fff;letter-spacing:0.278px;">Relationships</div><div class="t" style="left:372.50px;top:437.16px;font-family:'Liberation Sans', sans-serif;font-size:18px;font-weight:400;color:#000;letter-spacing:0.000px;">0</div><div class="t" style="left:414.50px;top:437.16px;font-family:'Liberation Sans', sans-serif;font-size:18px;font-weight:400;color:#fff;letter-spacing:0.121px;">Workers</div><div class="t" style="left:495.50px;top:437.16px;font-family:'Liberation Sans', sans-serif;font-size:18px;font-weight:400;color:#000;letter-spacing:0.000px;">1</div><div class="t" style="left:536.00px;top:437.16px;font-family:'Liberation Sans', sans-serif;font-size:18px;font-weight:400;color:#fff;letter-spacing:0.454px;">Pending Activities</div><div class="t" style="left:699.50px;top:437.16px;font-family:'Liberation Sans', sans-serif;font-size:18px;font-weight:400;color:#000;letter-spacing:0.000px;">1</div><div class="t" style="left:741.00px;top:437.16px;font-family:'Liberation Sans', sans-serif;font-size:18px;font-weight:400;color:#fff;letter-spacing:0.064px;">Call Stack</div><div class="t" style="left:844.90px;top:437.16px;font-family:'Liberation Sans', sans-serif;font-size:18px;font-weight:400;color:#fff;letter-spacing:0.096px;">Queries</div><div class="t" style="left:928.90px;top:437.16px;font-family:'Liberation Sans', sans-serif;font-size:18px;font-weight:400;color:#8b93f0;letter-spacing:0.313px;">User Metadata</div><div class="t" style="left:1073.60px;top:437.16px;font-family:'Liberation Sans', sans-serif;font-size:18px;font-weight:400;color:#fff;letter-spacing:0.421px;">Search Attributes</div><div class="t" style="left:1239.00px;top:437.16px;font-family:'Liberation Sans', sans-serif;font-size:18px;font-weight:400;color:#fff;letter-spacing:0.634px;">Memo</div><div class="t" style="left:120.50px;top:497.48px;font-family:'Liberation Sans', sans-serif;font-size:30.5px;font-weight:400;color:#fafafa;letter-spacing:0.235px;-webkit-text-stroke:0.7px #fafafa">Input</div><div class="t" style="left:1007.20px;top:496.98px;font-family:'Liberation Sans', sans-serif;font-size:30.5px;font-weight:400;color:#fafafa;letter-spacing:-0.396px;-webkit-text-stroke:0.7px #fafafa">Result</div><div class="t" style="left:152.70px;top:566.04px;font-family:'Liberation Mono', monospace;font-size:15.6px;font-weight:400;color:#f0f0f0;letter-spacing:0.000px;">{</div><div class="t" style="left:171.42px;top:587.04px;font-family:'Liberation Mono', monospace;font-size:15.6px;font-weight:400;color:#8d9af5;letter-spacing:0.000px;">&quot;webUrl&quot;</div><div class="t" style="left:246.30px;top:587.04px;font-family:'Liberation Mono', monospace;font-size:15.6px;font-weight:400;color:#f0f0f0;letter-spacing:0.000px;">: &quot;https://pbzlh-2405-201-6040-601d-6119-d16f-4df6-</div><div class="t" style="left:152.70px;top:608.54px;font-family:'Liberation Mono', monospace;font-size:15.6px;font-weight:400;color:#f0f0f0;letter-spacing:0.000px;">22af.a.free.pinggy.link&quot;,</div><div class="t" style="left:171.42px;top:630.04px;font-family:'Liberation Mono', monospace;font-size:15.6px;font-weight:400;color:#8d9af5;letter-spacing:0.000px;">&quot;repoPath&quot;</div><div class="t" style="left:265.02px;top:630.04px;font-family:'Liberation Mono', monospace;font-size:15.6px;font-weight:400;color:#f0f0f0;letter-spacing:0.000px;">: &quot;/repos/vuln-demo-app&quot;</div><div class="t" style="left:152.70px;top:651.04px;font-family:'Liberation Mono', monospace;font-size:15.6px;font-weight:400;color:#f0f0f0;letter-spacing:0.000px;">}</div><div class="t" style="left:1039.60px;top:565.60px;font-family:'Liberation Mono', monospace;font-size:15.4px;font-weight:400;color:#f0f0f0;letter-spacing:0.136px;">Results will appear upon completion.</div><div class="t" style="left:120.80px;top:704.18px;font-family:'Liberation Sans', sans-serif;font-size:30.5px;font-weight:400;color:#fafafa;letter-spacing:-0.184px;-webkit-text-stroke:0.7px #fafafa">Event History</div><div class="t" style="left:1196.50px;top:710.06px;font-family:'Liberation Sans', sans-serif;font-size:18px;font-weight:400;color:#fff;letter-spacing:0.294px;">Descending</div><div class="t" style="left:1365.30px;top:710.06px;font-family:'Liberation Sans', sans-serif;font-size:18px;font-weight:400;color:#fff;letter-spacing:0.374px;">Minimized</div><div class="t" style="left:1531.20px;top:710.06px;font-family:'Liberation Sans', sans-serif;font-size:18px;font-weight:400;color:#fff;letter-spacing:0.139px;">Filter</div><div class="t" style="left:1644.00px;top:710.06px;font-family:'Liberation Sans', sans-serif;font-size:18px;font-weight:400;color:#fff;letter-spacing:-0.202px;">Freeze</div><div class="t" style="left:1771.40px;top:710.06px;font-family:'Liberation Sans', sans-serif;font-size:18px;font-weight:400;color:#fff;letter-spacing:0.280px;">Download</div><div class="t" style="left:239.30px;top:820.73px;font-family:'Liberation Sans', sans-serif;font-size:16.5px;font-weight:400;color:#fff;letter-spacing:0.268px;">Attempt 1 / 50 • runPreReconAgent</div><div class="t" style="left:207.70px;top:858.23px;font-family:'Liberation Sans', sans-serif;font-size:16.5px;font-weight:400;color:#fff;letter-spacing:0.185px;">logPhaseTransition</div><div style="position:absolute;left:145.3px;top:763.5px;width:0;height:0;transform-origin:0 0;transform:rotate(90deg)"><div class="t" style="left:0.00px;top:-13.54px;font-family:'Liberation Sans', sans-serif;font-size:16px;font-weight:400;color:#f2f2f2;letter-spacing:0.198px;">2026-02-11 UTC 20:00:46.77</div></div><div style="position:absolute;left:1835.5px;top:763.5px;width:0;height:0;transform-origin:0 0;transform:rotate(90deg)"><div class="t" style="left:0.00px;top:-13.54px;font-family:'Liberation Sans', sans-serif;font-size:16px;font-weight:400;color:#f2f2f2;letter-spacing:0.198px;">2026-02-11 UTC 20:04:33.78</div></div><div style="position:absolute;left:261.8px;top:920.2px;width:0;height:0;transform-origin:0 0;transform:rotate(90deg)"><div class="t" style="left:-1.00px;top:-13.12px;font-family:'Liberation Sans', sans-serif;font-size:15.5px;font-weight:400;color:#f2f2f2;letter-spacing:-0.545px;">11s</div></div><div style="position:absolute;left:343.6px;top:920.2px;width:0;height:0;transform-origin:0 0;transform:rotate(90deg)"><div class="t" style="left:0.00px;top:-13.12px;font-family:'Liberation Sans', sans-serif;font-size:15.5px;font-weight:400;color:#f2f2f2;letter-spacing:0.730px;">22s</div></div><div style="position:absolute;left:425.5px;top:920.2px;width:0;height:0;transform-origin:0 0;transform:rotate(90deg)"><div class="t" style="left:0.00px;top:-13.12px;font-family:'Liberation Sans', sans-serif;font-size:15.5px;font-weight:400;color:#f2f2f2;letter-spacing:1.280px;">34s</div></div><div style="position:absolute;left:507.3px;top:920.2px;width:0;height:0;transform-origin:0 0;transform:rotate(90deg)"><div class="t" style="left:0.00px;top:-13.12px;font-family:'Liberation Sans', sans-serif;font-size:15.5px;font-weight:400;color:#f2f2f2;letter-spacing:1.280px;">45s</div></div><div style="position:absolute;left:589.2px;top:920.2px;width:0;height:0;transform-origin:0 0;transform:rotate(90deg)"><div class="t" style="left:0.00px;top:-13.12px;font-family:'Liberation Sans', sans-serif;font-size:15.5px;font-weight:400;color:#f2f2f2;letter-spacing:1.280px;">56s</div></div><div style="position:absolute;left:671.0px;top:920.2px;width:0;height:0;transform-origin:0 0;transform:rotate(90deg)"><div class="t" style="left:-1.00px;top:-13.12px;font-family:'Liberation Sans', sans-serif;font-size:15.5px;font-weight:400;color:#f2f2f2;letter-spacing:0.310px;">1m 8s</div></div><div style="position:absolute;left:752.8px;top:920.2px;width:0;height:0;transform-origin:0 0;transform:rotate(90deg)"><div class="t" style="left:-1.00px;top:-13.12px;font-family:'Liberation Sans', sans-serif;font-size:15.5px;font-weight:400;color:#f2f2f2;letter-spacing:-0.076px;">1m 19s</div></div><div style="position:absolute;left:834.7px;top:920.2px;width:0;height:0;transform-origin:0 0;transform:rotate(90deg)"><div class="t" style="left:-1.00px;top:-13.12px;font-family:'Liberation Sans', sans-serif;font-size:15.5px;font-weight:400;color:#f2f2f2;letter-spacing:0.484px;">1m 30s</div></div><div style="position:absolute;left:916.5px;top:920.2px;width:0;height:0;transform-origin:0 0;transform:rotate(90deg)"><div class="t" style="left:-1.00px;top:-13.12px;font-family:'Liberation Sans', sans-serif;font-size:15.5px;font-weight:400;color:#f2f2f2;letter-spacing:0.484px;">1m 42s</div></div><div style="position:absolute;left:998.4px;top:920.2px;width:0;height:0;transform-origin:0 0;transform:rotate(90deg)"><div class="t" style="left:-1.00px;top:-13.12px;font-family:'Liberation Sans', sans-serif;font-size:15.5px;font-weight:400;color:#f2f2f2;letter-spacing:0.484px;">1m 53s</div></div><div style="position:absolute;left:1080.2px;top:920.2px;width:0;height:0;transform-origin:0 0;transform:rotate(90deg)"><div class="t" style="left:0.00px;top:-13.12px;font-family:'Liberation Sans', sans-serif;font-size:15.5px;font-weight:400;color:#f2f2f2;letter-spacing:0.635px;">2m 4s</div></div><div style="position:absolute;left:1162.0px;top:920.2px;width:0;height:0;transform-origin:0 0;transform:rotate(90deg)"><div class="t" style="left:0.00px;top:-13.12px;font-family:'Liberation Sans', sans-serif;font-size:15.5px;font-weight:400;color:#f2f2f2;letter-spacing:0.284px;">2m 16s</div></div><div style="position:absolute;left:1243.9px;top:920.2px;width:0;height:0;transform-origin:0 0;transform:rotate(90deg)"><div class="t" style="left:0.00px;top:-13.12px;font-family:'Liberation Sans', sans-serif;font-size:15.5px;font-weight:400;color:#f2f2f2;letter-spacing:0.284px;">2m 27s</div></div><div style="position:absolute;left:1325.7px;top:920.2px;width:0;height:0;transform-origin:0 0;transform:rotate(90deg)"><div class="t" style="left:0.00px;top:-13.12px;font-family:'Liberation Sans', sans-serif;font-size:15.5px;font-weight:400;color:#f2f2f2;letter-spacing:0.664px;">2m 38s</div></div><div style="position:absolute;left:1407.6px;top:920.2px;width:0;height:0;transform-origin:0 0;transform:rotate(90deg)"><div class="t" style="left:0.00px;top:-13.12px;font-family:'Liberation Sans', sans-serif;font-size:15.5px;font-weight:400;color:#f2f2f2;letter-spacing:0.664px;">2m 50s</div></div><div style="position:absolute;left:1489.4px;top:920.2px;width:0;height:0;transform-origin:0 0;transform:rotate(90deg)"><div class="t" style="left:0.00px;top:-13.12px;font-family:'Liberation Sans', sans-serif;font-size:15.5px;font-weight:400;color:#f2f2f2;letter-spacing:0.060px;">3m 1s</div></div><div style="position:absolute;left:1571.2px;top:920.2px;width:0;height:0;transform-origin:0 0;transform:rotate(90deg)"><div class="t" style="left:0.00px;top:-13.12px;font-family:'Liberation Sans', sans-serif;font-size:15.5px;font-weight:400;color:#f2f2f2;letter-spacing:0.184px;">3m 12s</div></div><div style="position:absolute;left:1653.1px;top:920.2px;width:0;height:0;transform-origin:0 0;transform:rotate(90deg)"><div class="t" style="left:0.00px;top:-13.12px;font-family:'Liberation Sans', sans-serif;font-size:15.5px;font-weight:400;color:#f2f2f2;letter-spacing:0.664px;">3m 24s</div></div><div style="position:absolute;left:1734.9px;top:920.2px;width:0;height:0;transform-origin:0 0;transform:rotate(90deg)"><div class="t" style="left:0.00px;top:-13.12px;font-family:'Liberation Sans', sans-serif;font-size:15.5px;font-weight:400;color:#f2f2f2;letter-spacing:0.664px;">3m 35s</div></div><div class="t" style="left:1544.70px;top:1116.06px;font-family:'Liberation Sans', sans-serif;font-size:18px;font-weight:400;color:#fff;letter-spacing:0.148px;">All</div><div class="t" style="left:1638.40px;top:1116.06px;font-family:'Liberation Sans', sans-serif;font-size:18px;font-weight:400;color:#fff;letter-spacing:0.296px;">Compact</div><div class="t" style="left:1786.60px;top:1116.06px;font-family:'Liberation Sans', sans-serif;font-size:18px;font-weight:400;color:#fff;letter-spacing:-0.336px;">JSON</div><div class="t" style="left:24.50px;top:1168.48px;font-family:'Liberation Sans', sans-serif;font-size:15.5px;font-weight:700;color:#a8a8a8;letter-spacing:-0.382px;">Open</div><div class="t" style="left:66.50px;top:1168.48px;font-family:'Liberation Sans', sans-serif;font-size:15.5px;font-weight:700;color:#ffffff;letter-spacing:0.476px;">localhost:8233/namespaces/default/workflows/pbzlh-2405-201-6040-601d-6119-d16f-4df6-22af-a-free-pinggy-link_shannon-1770840046766/019c4e4a-bcb9-7077-8885-6d80a7d1caf8/user-metadata</div><div class="t" style="left:1577.00px;top:1168.48px;font-family:'Liberation Sans', sans-serif;font-size:15.5px;font-weight:700;color:#a8a8a8;letter-spacing:-0.055px;">in a new tab and focus it</div>


</body></html>
